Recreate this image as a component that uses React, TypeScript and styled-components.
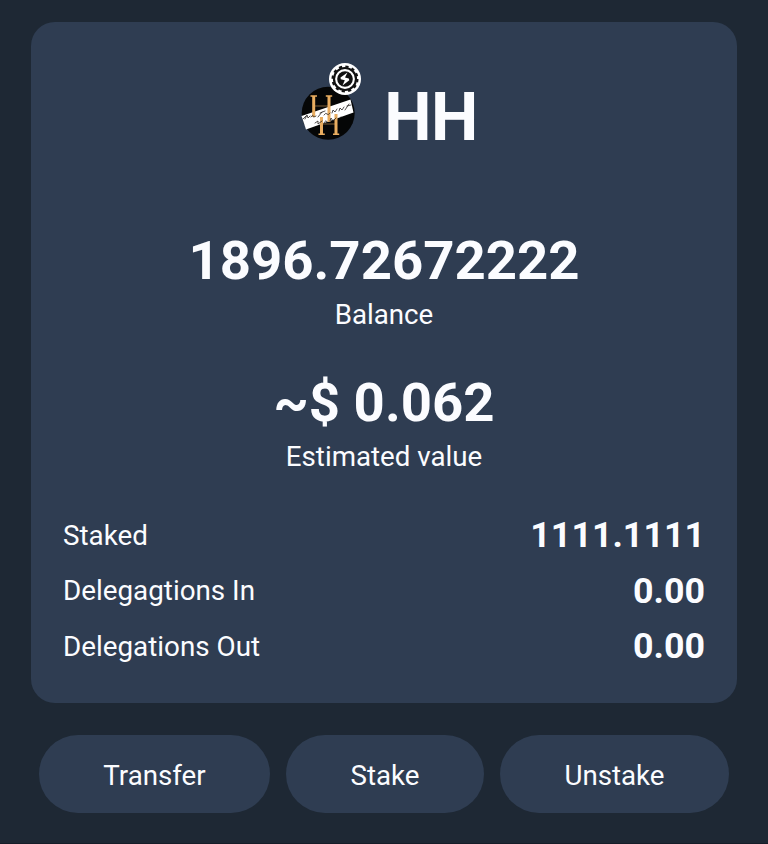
import styled, { createGlobalStyle } from 'styled-components';

const GlobalStyle = createGlobalStyle`
    * {
        box-sizing: border-box;
    }

    body {
        margin: 0;
        background-color: #1e2834;
        color: #fbfcff;
        font-family: Roboto, 'Liberation Sans', sans-serif;
    }
`;

const Page = styled.main`
    height: 844px;
    padding: 22px 31px 0;
    overflow: hidden;
    border-bottom: 1px solid #161d28;
`;

const Card = styled.section`
    height: 681px;
    padding: 41px 32px 0;
    border-radius: 24px;
    background-color: #2f3d52;
`;

const Header = styled.header`
    display: flex;
    justify-content: center;
    height: 110px;
    gap: 22px;
    padding-left: 10px;
`;

const TokenIcon = styled.svg`
    display: block;
    width: 62px;
    height: 79px;
`;

const Symbol = styled.h1`
    margin: 20px 0 0;
    font-size: 67px;
    line-height: 68px;
    font-weight: 700;
    letter-spacing: -0.5px;
`;

const Figure = styled.div`
    height: 142px;
    padding-top: 57px;
    text-align: center;
`;

const Amount = styled.div`
    font-size: 54.5px;
    line-height: 60px;
    font-weight: 700;
`;

const Caption = styled.div`
    font-size: 27.7px;
    line-height: 32px;
    margin-top: 9px;
`;

const Rows = styled.dl`
    margin: 50.5px 0 0;
`;

const Row = styled.div`
    display: flex;
    align-items: center;
    justify-content: space-between;
    height: 55.5px;
`;

const Label = styled.dt`
    font-size: 27.8px;
`;

const Value = styled.dd`
    margin: 0;
    font-size: 35.8px;
    font-weight: 700;
`;

const Actions = styled.div`
    display: flex;
    gap: 16px;
    padding: 32px 8px 0;
`;

const Button = styled.button<{ $width: number }>`
    width: ${({ $width }) => $width}px;
    height: 78px;
    padding: 2px 0 0;
    border: 0;
    border-radius: 39px;
    background-color: #2f3d52;
    color: inherit;
    font-family: inherit;
    font-size: 27.7px;
`;

const stats = [
    { label: 'Staked', value: '1111.1111' },
    { label: 'Delegagtions In', value: '0.00' },
    { label: 'Delegations Out', value: '0.00' },
];

const actions = [
    { text: 'Transfer', width: 231 },
    { text: 'Stake', width: 198 },
    { text: 'Unstake', width: 229 },
];

function HHIcon() {
    return (
        <TokenIcon viewBox="0 0 62 79">
            <circle cx="28.2" cy="50.2" r="26.5" fill="#050606" />
            <path d="M1.5 53 50.5 36.5 53.5 49.5 6 66.5Z" fill="#fff" />
            {/* upper and lower serif columns */}
            <g fill="none" stroke="#e9ad60" strokeWidth="3">
                <path d="M13.7 33V54M29 33V59M21.5 54V71M36 51V71" />
                <path d="M10.5 33H17M25.8 33H32.2M18.5 71.3H24.8M33 71.3H39.2" strokeWidth="1.5" />
                <path d="M14 43H29M22 61H36" strokeWidth="0.9" strokeOpacity="0.6" />
            </g>
            {/* handwriting on the band */}
            <g fill="none" stroke="#282522" strokeWidth="0.8" strokeLinecap="round">
                <path d="M3 56 6 53M5 56 7 52 8 55 10 53M11 54Q13 51 13 53T16 53M18 54 22 49M20 50 25 48M24 52Q26 49 27 51T30 50M32 50 33 47 35 49 37 46M39 48 40 45 42 47 44 44M45 47 49 41M47 43 51 42" />
                <path d="M15 60 18 58 18 61 22 58M24 60Q26 56 27 59M30 58 31 55 33 58 36 55M41 54h.1" />
            </g>
            <circle cx="45" cy="16" r="16" fill="#fff" />
            <circle cx="45" cy="16" r="11" fill="none" stroke="#111" strokeWidth="2.2" />
            <circle cx="45" cy="16" r="12.5" fill="none" stroke="#111" strokeWidth="2" strokeDasharray="3.2 3.345" />
            <circle cx="45" cy="16" r="7.8" fill="#111" />
            <path d="M47.5 9.5 40.5 14.5 40.8 16.2 44.8 17.2 42.5 22.5 49.3 17.3 48.8 15.5 45 14.5Z" fill="#fff" />
        </TokenIcon>
    );
}

function App() {
    return (
        <Page>
            <GlobalStyle />
            <Card>
                <Header>
                    <HHIcon />
                    <Symbol>HH</Symbol>
                </Header>
                <Figure>
                    <Amount>1896.72672222</Amount>
                    <Caption>Balance</Caption>
                </Figure>
                <Figure>
                    <Amount>~$ 0.062</Amount>
                    <Caption>Estimated value</Caption>
                </Figure>
                <Rows>
                    {stats.map(({ label, value }) => (
                        <Row key={label}>
                            <Label>{label}</Label>
                            <Value>{value}</Value>
                        </Row>
                    ))}
                </Rows>
            </Card>
            <Actions>
                {actions.map(({ text, width }) => (
                    <Button key={text} $width={width}>{text}</Button>
                ))}
            </Actions>
        </Page>
    );
}

export default App;
